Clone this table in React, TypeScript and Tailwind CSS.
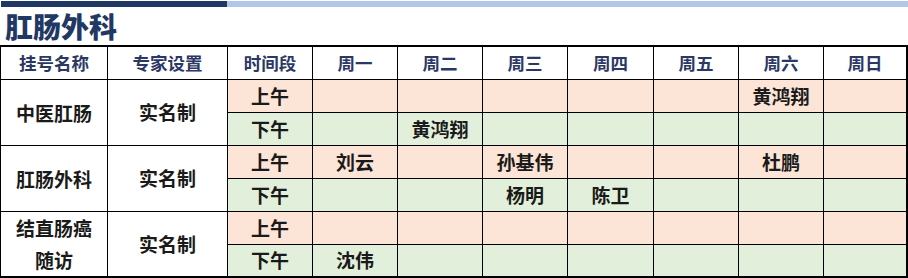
import React from 'react';

const days = ['周一', '周二', '周三', '周四', '周五', '周六', '周日'];

type Slot = { label: string; am: string[]; pm: string[]; mode: string; rowCls: string };

const slots: Slot[] = [
  { label: '中医肛肠', mode: '实名制', rowCls: 'row-start-2', am: ['', '', '', '', '', '黄鸿翔', ''], pm: ['', '黄鸿翔', '', '', '', '', ''] },
  { label: '肛肠外科', mode: '实名制', rowCls: 'row-start-4', am: ['刘云', '', '孙基伟', '', '', '杜鹏', ''], pm: ['', '', '杨明', '陈卫', '', '', ''] },
  { label: '结直肠癌\n随访', mode: '实名制', rowCls: 'row-start-6', am: ['', '', '', '', '', '', ''], pm: ['沈伟', '', '', '', '', '', ''] },
];

const font = { fontFamily: '"Noto Sans CJK SC", "Noto Sans", sans-serif' };

const cell = 'flex items-center justify-center text-[19px] font-bold text-[#1a1a1a]';

export default function App() {
  return (
    <div className="w-[908px] h-[278px] bg-white overflow-hidden" style={font}>
      {/* top stripe */}
      <div className="flex h-[6px] mt-px">
        <div className="w-[226px] ml-px bg-[#203864]" />
        <div className="flex-1 bg-[#b4c6e7]" />
      </div>

      <div className="h-[38px] flex items-center pl-[5px]">
        <h1 className="text-[28px] leading-none font-black text-[#1f3864]">肛肠外科</h1>
      </div>

      <div className="grid grid-cols-[106px_119px_84px_84px_84px_84px_85px_84px_84px_82px] grid-rows-[32px_32px_32px_32px_32px_32px_31px] gap-px bg-black pt-[2px] pb-[2px] pl-px pr-[2px]">
        {['挂号名称', '专家设置', '时间段', ...days].map(h => (
          <div key={h} className="bg-white flex items-center justify-center text-[17.5px] font-bold text-[#2b3764]">
            {h}
          </div>
        ))}

        {slots.map((s, i) => (
          <React.Fragment key={i}>
            <div className={`${cell} ${s.rowCls} row-span-2 col-start-1 bg-white text-center leading-[32px] whitespace-pre-line`}>
              {s.label}
            </div>
            <div className={`${cell} ${s.rowCls} row-span-2 col-start-2 bg-white`}>
              {s.mode}
            </div>
            <div className={`${cell} bg-[#fce4d6]`}>上午</div>
            {s.am.map((n, j) => (
              <div key={'a' + j} className={`${cell} bg-[#fce4d6]`}>{n}</div>
            ))}
            <div className={`${cell} col-start-3 bg-[#e2efda]`}>下午</div>
            {s.pm.map((n, j) => (
              <div key={'p' + j} className={`${cell} bg-[#e2efda]`}>{n}</div>
            ))}
          </React.Fragment>
        ))}
      </div>
    </div>
  );
}
